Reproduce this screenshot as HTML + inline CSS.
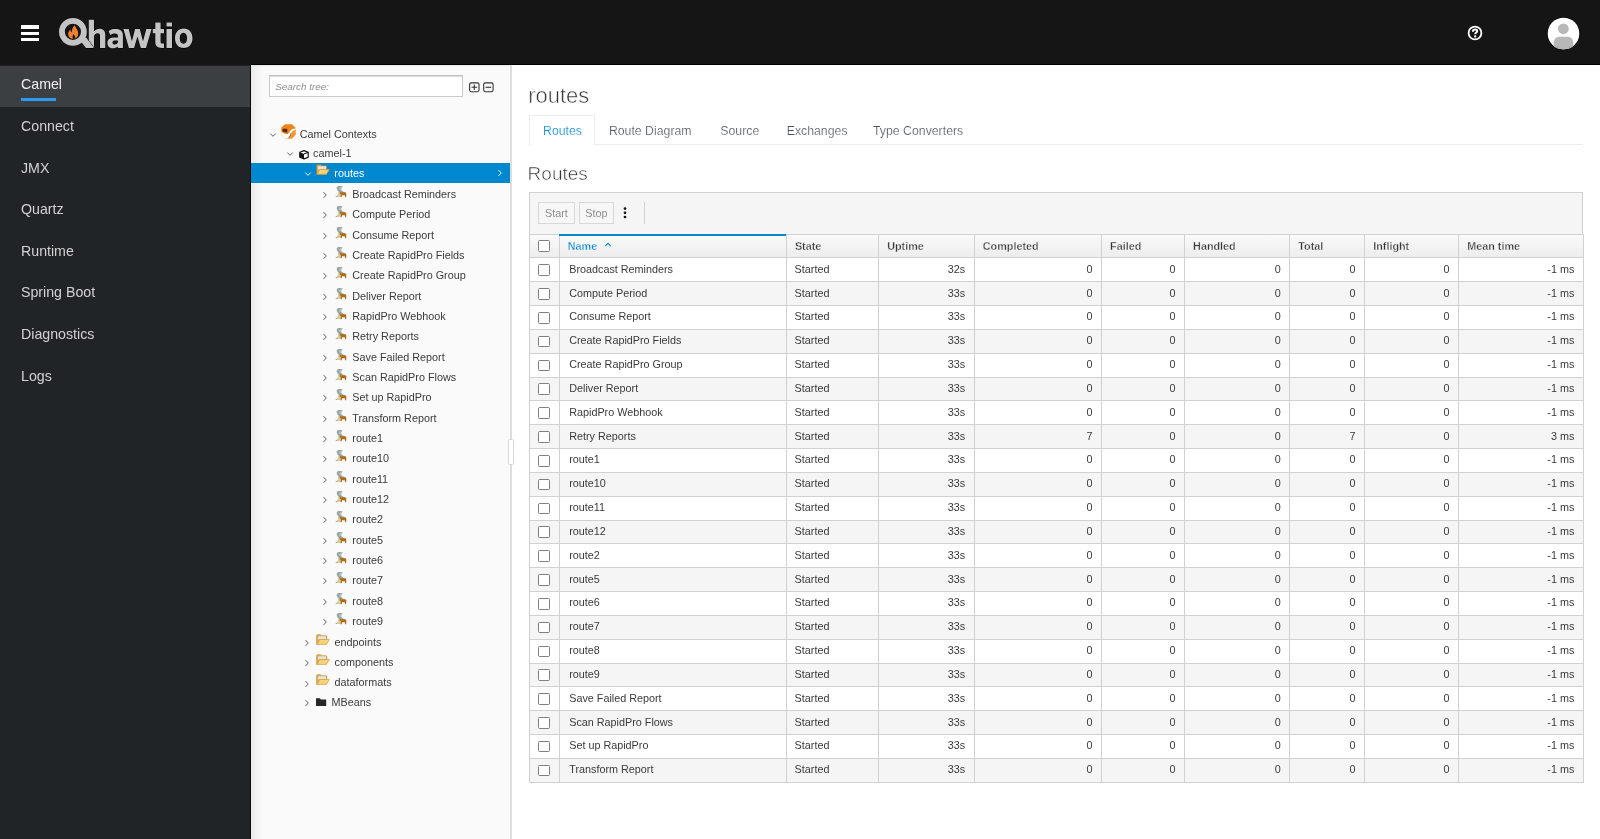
<!DOCTYPE html><html><head><meta charset="utf-8"><style>
*{box-sizing:border-box;margin:0;padding:0}
html,body{width:1600px;height:839px;overflow:hidden;background:#fff;font-family:"Liberation Sans", sans-serif;}
.a{position:absolute;white-space:nowrap}
.nav{position:absolute;left:21px;font-size:14.2px;line-height:16px;color:#d2d2d2;white-space:nowrap}
.t{position:absolute;font-size:10.8px;line-height:13px;color:#3a3a3a;white-space:nowrap}
.th{position:absolute;font-size:10.8px;line-height:13px;color:#363636;font-weight:700;-webkit-text-stroke:0.3px #f2f2f2;white-space:nowrap}
.tab{position:absolute;font-size:12.3px;line-height:14px;color:#4d5258;-webkit-text-stroke:0.2px #fff;white-space:nowrap;top:123.50px}
svg{position:absolute;overflow:visible}
</style></head><body><div id="root" style="position:absolute;left:0;top:0;width:1600px;height:839px;overflow:hidden;will-change:transform">
<div class="a" style="left:0;top:0;width:1600px;height:65px;background:#151515"></div>
<div class="a" style="left:251px;top:64px;width:1349px;height:1.1px;background:#000"></div>
<div class="a" style="left:21px;top:25.2px;width:18px;height:3.6px;background:#fff"></div>
<div class="a" style="left:21px;top:31.5px;width:18px;height:3.6px;background:#fff"></div>
<div class="a" style="left:21px;top:37.6px;width:18px;height:3.6px;background:#fff"></div>
<svg style="left:0;top:0" width="200" height="65" viewBox="0 0 200 65">
<g stroke="#000" stroke-width="1" paint-order="stroke" stroke-linejoin="miter">
<path d="M88.75 19.85 H94 V31.3 C95.4 29.6 97.4 28.7 99.6 28.7 C103.3 28.7 105.3 31.1 105.3 34.8 V47.9 H100 V35.8 C100 34 99.1 33.3 97.6 33.3 C95.8 33.3 94 34.6 94 36.7 V47.9 H88.75 Z" fill="#c4c4c4"/>
<path fill-rule="evenodd" d="M108.6 31.2 C110.2 29.7 112.4 29.1 115.2 29.1 C119.8 29.1 122.9 30.9 122.9 35.2 V47.9 H117.9 V46.4 C116.6 47.6 114.9 48.2 112.9 48.2 C109.6 48.2 107.4 46.2 107.4 42.9 C107.4 39.2 110.3 37.5 114.2 37.5 H117.9 V35.6 C117.9 34.1 116.7 33.4 114.8 33.4 C112.9 33.4 111.3 34 110.3 35 Z M117.9 40.4 H114.6 C113.2 40.4 112.5 41.2 112.5 42.5 C112.5 43.8 113.3 44.6 114.7 44.6 C116.4 44.6 117.9 43.6 117.9 42.1 Z" fill="#c4c4c4"/>
<path d="M80.6 41.2 L86 37.2 L93.9 47.9 L86 48.1 Z" fill="#c4c4c4"/>
<path d="M123.4 29 H128.7 L131.9 41.2 L135.1 29 H139.8 L143 41.2 L146.3 29 H151.6 L146 47.9 H140.8 L137.45 36.4 L134.1 47.9 H128.9 Z" fill="#c4c4c4"/>
<path d="M155.3 22.5 H160.6 V29 H164 V33.2 H160.6 V41.4 C160.6 42.9 161.3 43.6 162.8 43.6 H164 V47.9 H161.8 C157.4 47.9 155.3 46 155.3 42 V33.2 H152.75 V29 H155.3 Z" fill="#c4c4c4"/>
<path d="M166.5 22.5 H172 V26.6 H166.5 Z M166.5 29 H172 V47.9 H166.5 Z" fill="#c4c4c4"/>
<path fill-rule="evenodd" d="M183.75 28.6 C189.3 28.6 192.5 32.6 192.5 38.3 C192.5 44 189.3 48.1 183.75 48.1 C178.2 48.1 175 44 175 38.3 C175 32.6 178.2 28.6 183.75 28.6 Z M183.4 32.8 C181 32.8 179.8 35 179.8 38.3 C179.8 41.6 181 43.8 183.4 43.8 C185.8 43.8 187 41.6 187 38.3 C187 35 185.8 32.8 183.4 32.8 Z" fill="#c4c4c4"/>
</g>
<circle cx="72.9" cy="31.8" r="11" fill="none" stroke="#c4c4c4" stroke-width="5.8"/>
<path d="M74.6 25.2 C75.6 27.8 78.2 29.8 78.2 33.6 C78.2 36.8 76.2 38.9 73.4 38.9 C70.2 38.9 68.1 36.7 68.2 34 C68.3 31.8 69.6 30.6 70.4 29.6 C70.5 31 70.9 32.1 71.8 32.6 C71.6 29.8 72.8 27 74.6 25.2 Z" fill="#f0822f"/>
<path d="M72.8 38.9 C72.2 37 72.6 35.3 73.8 33.9 C74.3 35.6 75.6 36.4 75.5 38.4 Z" fill="#151515"/>
</svg>
<svg style="left:1460px;top:20px" width="30" height="30" viewBox="0 0 30 30">
<circle cx="15" cy="13" r="6.4" fill="none" stroke="#fff" stroke-width="1.8"/>
<path d="M12.9 11.7 C12.9 10.1 13.9 9.4 15.1 9.4 C16.3 9.4 17.2 10.1 17.2 11.2 C17.2 12.5 15.2 12.7 15.2 14.3" fill="none" stroke="#fff" stroke-width="2"/>
<circle cx="15.2" cy="16.4" r="1.15" fill="#fff"/>
</svg>
<svg style="left:1540px;top:10px" width="48" height="48" viewBox="0 0 48 48">
<defs><clipPath id="avc"><circle cx="23.5" cy="23.5" r="15.9"/></clipPath></defs>
<circle cx="23.5" cy="23.5" r="16.2" fill="#000"/>
<circle cx="23.5" cy="23.5" r="15.8" fill="#fff"/>
<g clip-path="url(#avc)">
<circle cx="23.4" cy="18.8" r="5.4" fill="#b8b8b8"/>
<path d="M13.8 40 L13.8 32.5 C13.8 28.8 16.5 26.8 20 26.8 L27 26.8 C30.5 26.8 33.2 28.8 33.2 32.5 L33.2 40 Z" fill="#b8b8b8"/>
<path d="M17.5 36 L17.5 40 M29.4 36 L29.4 40" stroke="#a6a6a6" stroke-width="1.2"/>
</g></svg>
<div class="a" style="left:0;top:65.2px;width:251px;height:774px;background:#212427"></div>
<div class="a" style="left:0;top:65.5px;width:250px;height:41.8px;background:#3c3f42"></div>
<div class="a" style="left:21px;top:97.5px;width:35px;height:3px;background:#2b9af3"></div>
<div class="a" style="left:250px;top:65px;width:1.2px;height:774px;background:#0b0b0b"></div>
<div class="nav" style="top:76.20px;color:#f0f0f0">Camel</div>
<div class="nav" style="top:117.85px;color:#d2d2d2">Connect</div>
<div class="nav" style="top:159.50px;color:#d2d2d2">JMX</div>
<div class="nav" style="top:201.15px;color:#d2d2d2">Quartz</div>
<div class="nav" style="top:242.80px;color:#d2d2d2">Runtime</div>
<div class="nav" style="top:284.45px;color:#d2d2d2">Spring Boot</div>
<div class="nav" style="top:326.10px;color:#d2d2d2">Diagnostics</div>
<div class="nav" style="top:367.75px;color:#d2d2d2">Logs</div>
<div class="a" style="left:251.2px;top:65.2px;width:259.6px;height:774px;background:#fafafa"></div>
<div class="a" style="left:251.2px;top:65.2px;width:12px;height:774px;background:linear-gradient(to right,#e9e9e9,rgba(250,250,250,0))"></div>
<div class="a" style="left:251px;top:65.2px;width:260px;height:2px;background:linear-gradient(to bottom,#e6e6e6,rgba(250,250,250,0))"></div>
<div class="a" style="left:510.3px;top:65.2px;width:1.4px;height:774px;background:#dedede"></div>
<div class="a" style="left:507.5px;top:439.3px;width:6px;height:26.2px;background:#fff;border:1px solid #d8d8d8;border-radius:2px"></div>
<div class="a" style="left:269px;top:74.7px;width:193.5px;height:22px;background:#fff;border:1px solid #c9c9c9;border-top-color:#c2c2c2;box-shadow:inset 0 1px 0 #dcdcdc"></div>
<div class="t" style="left:275.2px;top:79.9px;color:#8c8c8c;font-style:italic;font-size:9.9px">Search tree:</div>
<svg style="left:466px;top:80px" width="30" height="14" viewBox="0 0 30 14">
<rect x="3.6" y="2.9" width="9.4" height="8.8" rx="1.6" fill="none" stroke="#333" stroke-width="1.1"/>
<path d="M5.5 7.3 H11.1 M8.3 4.6 V10" stroke="#333" stroke-width="1.1"/>
<rect x="17.7" y="2.9" width="9.4" height="8.8" rx="1.6" fill="none" stroke="#333" stroke-width="1.1"/>
<path d="M19.6 7.3 H25.2" stroke="#333" stroke-width="1.1"/>
</svg>
<div class="a" style="left:251.2px;top:163px;width:259.1px;height:20.4px;background:#0088ce"></div>
<svg style="left:496.00px;top:169.30px" width="8" height="8" viewBox="0 0 8 8"><path d="M2.5 1.1 L5.3 4 L2.5 6.9" fill="none" stroke="#fff" stroke-width="0.95"/></svg>
<svg style="left:269.40px;top:130.80px" width="8" height="8" viewBox="0 0 8 8"><path d="M1.3 2.6 L4 5.3 L6.7 2.6" fill="none" stroke="#5a5a5a" stroke-width="0.95"/></svg>
<svg style="left:281.3px;top:123.6px" width="15" height="15" viewBox="0 0 15 15">
<path d="M4 0.2 L11 0.2 L14.5 3.8 L14.5 10.8 L11 14.4 L4 14.4 L0.2 10.8 L0.2 3.8 Z" fill="#ef8419"/>
<path d="M9.5 7.5 L14.5 6 L14.5 10.8 L11 14.4 L7.5 14.4 Z" fill="#f39a34"/>
<path d="M1.6 5 C3 4.5 4.8 4.5 6.3 5 L6.2 8.4 C4.6 8.6 3 8.2 1.5 7.3 Z" fill="#55290c"/>
<path d="M0.2 7.3 C1.6 9 3.6 10 5.7 10 C7.2 9.9 8 9 8.8 7.4 C9.8 5.5 11.6 4.6 14.5 4.5 L14.5 5.9 C12.5 6.1 11.2 6.9 10.5 8.5 C9.5 10.9 8.6 13.4 7.2 14.4 L4 14.4 L0.2 10.8 Z" fill="#fff"/>
<path d="M7.2 14.4 C8.5 13.2 9.3 11.4 10.1 9.3" fill="none" stroke="#4a2508" stroke-width="0.6"/>
</svg>
<div class="t" style="left:299.8px;top:127.70px">Camel Contexts</div>
<svg style="left:286.40px;top:150.00px" width="8" height="8" viewBox="0 0 8 8"><path d="M1.3 2.6 L4 5.3 L6.7 2.6" fill="none" stroke="#5a5a5a" stroke-width="0.95"/></svg>
<svg style="left:298.9px;top:149.6px" width="10" height="9.5" viewBox="0 0 10 9.5">
<path d="M5 0.6 L9.2 2.3 L9.2 7.2 L5 8.9 L0.8 7.2 L0.8 2.3 Z" fill="#fff" stroke="#111" stroke-width="1.2" stroke-linejoin="round"/>
<path d="M0.8 2.3 L5 4 L5 8.9 L0.8 7.2 Z" fill="#111"/>
<path d="M5 4 L9.2 2.3" stroke="#111" stroke-width="1.1"/>
</svg>
<div class="t" style="left:313.1px;top:147.00px">camel-1</div>
<svg style="left:303.75px;top:170.40px" width="8" height="8" viewBox="0 0 8 8"><path d="M1.3 2.6 L4 5.3 L6.7 2.6" fill="none" stroke="#fff" stroke-width="0.95"/></svg>
<svg style="left:316.00px;top:164.40px" width="14" height="12" viewBox="0 0 14 12">
<path d="M0.6 1.7 C0.6 1.1 1 0.7 1.5 0.7 L4.6 0.7 L5.6 1.7 L10 1.7 C10.5 1.7 10.8 2.1 10.8 2.6 L10.8 5.2 L0.6 10.4 Z" fill="#e2ac52" stroke="#b07b2a" stroke-width="0.5"/>
<path d="M2 2.3 L10 2.3 L10 5.4 L2 5.4 Z" fill="#e6e6df"/>
<path d="M0.8 10.4 L3.8 5.4 L13.4 5.4 L10.4 10.4 Z" fill="#f6d27c" stroke="#c9902f" stroke-width="0.6"/>
</svg>
<div class="t" style="left:334.3px;top:167.40px;color:#fff">routes</div>
<svg style="left:320.60px;top:190.90px" width="8" height="8" viewBox="0 0 8 8"><path d="M2.5 1.1 L5.3 4 L2.5 6.9" fill="none" stroke="#5a5a5a" stroke-width="0.95"/></svg>
<svg style="left:335.00px;top:186.00px" width="12" height="12" viewBox="0 0 12 12">
<path d="M2.7 0.3 C4.5 -0.1 6.6 0 8 0.6 C6.2 1.5 5.7 3.2 6.6 4.4 C7.4 5.4 9.2 5.9 11.2 6.6 L9.5 7.6 C7.2 7.3 4.8 6.6 3.4 5.3 C1.5 3.8 1.1 1.4 2.7 0.3 Z" fill="#98a5a3"/>
<path d="M3.6 3 C4.2 2 5.2 1.2 6.4 0.9 C5.6 2 5.5 3.3 6.1 4.4 Z" fill="#bfcac6"/>
<path d="M2.4 4.4 C3.8 5.8 4 7.2 3.2 8.5 C2.6 9.5 1.6 10.3 0.3 10.9 L4 10.9 L4.8 6.8 Z" fill="#a09b6e"/>
<path d="M3.7 6.4 L6.6 10.9 L1.8 10.9 Z" fill="#d9cc9e"/>
<path d="M4.3 5.6 L5.4 5.6 L6.6 6.6 L8.5 6.2 L10.3 6.6 L11.4 7.4 L11.3 8.7 L11.1 11.2 L10.2 11.2 L9.8 9.2 L7.1 9.2 L6.6 11.2 L5.7 11.2 L5.6 8.7 L4.9 7.1 Z" fill="#b06c14"/>
</svg>
<div class="t" style="left:352.3px;top:188.10px">Broadcast Reminders</div>
<svg style="left:320.60px;top:211.23px" width="8" height="8" viewBox="0 0 8 8"><path d="M2.5 1.1 L5.3 4 L2.5 6.9" fill="none" stroke="#5a5a5a" stroke-width="0.95"/></svg>
<svg style="left:335.00px;top:206.33px" width="12" height="12" viewBox="0 0 12 12">
<path d="M2.7 0.3 C4.5 -0.1 6.6 0 8 0.6 C6.2 1.5 5.7 3.2 6.6 4.4 C7.4 5.4 9.2 5.9 11.2 6.6 L9.5 7.6 C7.2 7.3 4.8 6.6 3.4 5.3 C1.5 3.8 1.1 1.4 2.7 0.3 Z" fill="#98a5a3"/>
<path d="M3.6 3 C4.2 2 5.2 1.2 6.4 0.9 C5.6 2 5.5 3.3 6.1 4.4 Z" fill="#bfcac6"/>
<path d="M2.4 4.4 C3.8 5.8 4 7.2 3.2 8.5 C2.6 9.5 1.6 10.3 0.3 10.9 L4 10.9 L4.8 6.8 Z" fill="#a09b6e"/>
<path d="M3.7 6.4 L6.6 10.9 L1.8 10.9 Z" fill="#d9cc9e"/>
<path d="M4.3 5.6 L5.4 5.6 L6.6 6.6 L8.5 6.2 L10.3 6.6 L11.4 7.4 L11.3 8.7 L11.1 11.2 L10.2 11.2 L9.8 9.2 L7.1 9.2 L6.6 11.2 L5.7 11.2 L5.6 8.7 L4.9 7.1 Z" fill="#b06c14"/>
</svg>
<div class="t" style="left:352.3px;top:208.43px">Compute Period</div>
<svg style="left:320.60px;top:231.56px" width="8" height="8" viewBox="0 0 8 8"><path d="M2.5 1.1 L5.3 4 L2.5 6.9" fill="none" stroke="#5a5a5a" stroke-width="0.95"/></svg>
<svg style="left:335.00px;top:226.66px" width="12" height="12" viewBox="0 0 12 12">
<path d="M2.7 0.3 C4.5 -0.1 6.6 0 8 0.6 C6.2 1.5 5.7 3.2 6.6 4.4 C7.4 5.4 9.2 5.9 11.2 6.6 L9.5 7.6 C7.2 7.3 4.8 6.6 3.4 5.3 C1.5 3.8 1.1 1.4 2.7 0.3 Z" fill="#98a5a3"/>
<path d="M3.6 3 C4.2 2 5.2 1.2 6.4 0.9 C5.6 2 5.5 3.3 6.1 4.4 Z" fill="#bfcac6"/>
<path d="M2.4 4.4 C3.8 5.8 4 7.2 3.2 8.5 C2.6 9.5 1.6 10.3 0.3 10.9 L4 10.9 L4.8 6.8 Z" fill="#a09b6e"/>
<path d="M3.7 6.4 L6.6 10.9 L1.8 10.9 Z" fill="#d9cc9e"/>
<path d="M4.3 5.6 L5.4 5.6 L6.6 6.6 L8.5 6.2 L10.3 6.6 L11.4 7.4 L11.3 8.7 L11.1 11.2 L10.2 11.2 L9.8 9.2 L7.1 9.2 L6.6 11.2 L5.7 11.2 L5.6 8.7 L4.9 7.1 Z" fill="#b06c14"/>
</svg>
<div class="t" style="left:352.3px;top:228.76px">Consume Report</div>
<svg style="left:320.60px;top:251.89px" width="8" height="8" viewBox="0 0 8 8"><path d="M2.5 1.1 L5.3 4 L2.5 6.9" fill="none" stroke="#5a5a5a" stroke-width="0.95"/></svg>
<svg style="left:335.00px;top:246.99px" width="12" height="12" viewBox="0 0 12 12">
<path d="M2.7 0.3 C4.5 -0.1 6.6 0 8 0.6 C6.2 1.5 5.7 3.2 6.6 4.4 C7.4 5.4 9.2 5.9 11.2 6.6 L9.5 7.6 C7.2 7.3 4.8 6.6 3.4 5.3 C1.5 3.8 1.1 1.4 2.7 0.3 Z" fill="#98a5a3"/>
<path d="M3.6 3 C4.2 2 5.2 1.2 6.4 0.9 C5.6 2 5.5 3.3 6.1 4.4 Z" fill="#bfcac6"/>
<path d="M2.4 4.4 C3.8 5.8 4 7.2 3.2 8.5 C2.6 9.5 1.6 10.3 0.3 10.9 L4 10.9 L4.8 6.8 Z" fill="#a09b6e"/>
<path d="M3.7 6.4 L6.6 10.9 L1.8 10.9 Z" fill="#d9cc9e"/>
<path d="M4.3 5.6 L5.4 5.6 L6.6 6.6 L8.5 6.2 L10.3 6.6 L11.4 7.4 L11.3 8.7 L11.1 11.2 L10.2 11.2 L9.8 9.2 L7.1 9.2 L6.6 11.2 L5.7 11.2 L5.6 8.7 L4.9 7.1 Z" fill="#b06c14"/>
</svg>
<div class="t" style="left:352.3px;top:249.09px">Create RapidPro Fields</div>
<svg style="left:320.60px;top:272.22px" width="8" height="8" viewBox="0 0 8 8"><path d="M2.5 1.1 L5.3 4 L2.5 6.9" fill="none" stroke="#5a5a5a" stroke-width="0.95"/></svg>
<svg style="left:335.00px;top:267.32px" width="12" height="12" viewBox="0 0 12 12">
<path d="M2.7 0.3 C4.5 -0.1 6.6 0 8 0.6 C6.2 1.5 5.7 3.2 6.6 4.4 C7.4 5.4 9.2 5.9 11.2 6.6 L9.5 7.6 C7.2 7.3 4.8 6.6 3.4 5.3 C1.5 3.8 1.1 1.4 2.7 0.3 Z" fill="#98a5a3"/>
<path d="M3.6 3 C4.2 2 5.2 1.2 6.4 0.9 C5.6 2 5.5 3.3 6.1 4.4 Z" fill="#bfcac6"/>
<path d="M2.4 4.4 C3.8 5.8 4 7.2 3.2 8.5 C2.6 9.5 1.6 10.3 0.3 10.9 L4 10.9 L4.8 6.8 Z" fill="#a09b6e"/>
<path d="M3.7 6.4 L6.6 10.9 L1.8 10.9 Z" fill="#d9cc9e"/>
<path d="M4.3 5.6 L5.4 5.6 L6.6 6.6 L8.5 6.2 L10.3 6.6 L11.4 7.4 L11.3 8.7 L11.1 11.2 L10.2 11.2 L9.8 9.2 L7.1 9.2 L6.6 11.2 L5.7 11.2 L5.6 8.7 L4.9 7.1 Z" fill="#b06c14"/>
</svg>
<div class="t" style="left:352.3px;top:269.42px">Create RapidPro Group</div>
<svg style="left:320.60px;top:292.55px" width="8" height="8" viewBox="0 0 8 8"><path d="M2.5 1.1 L5.3 4 L2.5 6.9" fill="none" stroke="#5a5a5a" stroke-width="0.95"/></svg>
<svg style="left:335.00px;top:287.65px" width="12" height="12" viewBox="0 0 12 12">
<path d="M2.7 0.3 C4.5 -0.1 6.6 0 8 0.6 C6.2 1.5 5.7 3.2 6.6 4.4 C7.4 5.4 9.2 5.9 11.2 6.6 L9.5 7.6 C7.2 7.3 4.8 6.6 3.4 5.3 C1.5 3.8 1.1 1.4 2.7 0.3 Z" fill="#98a5a3"/>
<path d="M3.6 3 C4.2 2 5.2 1.2 6.4 0.9 C5.6 2 5.5 3.3 6.1 4.4 Z" fill="#bfcac6"/>
<path d="M2.4 4.4 C3.8 5.8 4 7.2 3.2 8.5 C2.6 9.5 1.6 10.3 0.3 10.9 L4 10.9 L4.8 6.8 Z" fill="#a09b6e"/>
<path d="M3.7 6.4 L6.6 10.9 L1.8 10.9 Z" fill="#d9cc9e"/>
<path d="M4.3 5.6 L5.4 5.6 L6.6 6.6 L8.5 6.2 L10.3 6.6 L11.4 7.4 L11.3 8.7 L11.1 11.2 L10.2 11.2 L9.8 9.2 L7.1 9.2 L6.6 11.2 L5.7 11.2 L5.6 8.7 L4.9 7.1 Z" fill="#b06c14"/>
</svg>
<div class="t" style="left:352.3px;top:289.75px">Deliver Report</div>
<svg style="left:320.60px;top:312.88px" width="8" height="8" viewBox="0 0 8 8"><path d="M2.5 1.1 L5.3 4 L2.5 6.9" fill="none" stroke="#5a5a5a" stroke-width="0.95"/></svg>
<svg style="left:335.00px;top:307.98px" width="12" height="12" viewBox="0 0 12 12">
<path d="M2.7 0.3 C4.5 -0.1 6.6 0 8 0.6 C6.2 1.5 5.7 3.2 6.6 4.4 C7.4 5.4 9.2 5.9 11.2 6.6 L9.5 7.6 C7.2 7.3 4.8 6.6 3.4 5.3 C1.5 3.8 1.1 1.4 2.7 0.3 Z" fill="#98a5a3"/>
<path d="M3.6 3 C4.2 2 5.2 1.2 6.4 0.9 C5.6 2 5.5 3.3 6.1 4.4 Z" fill="#bfcac6"/>
<path d="M2.4 4.4 C3.8 5.8 4 7.2 3.2 8.5 C2.6 9.5 1.6 10.3 0.3 10.9 L4 10.9 L4.8 6.8 Z" fill="#a09b6e"/>
<path d="M3.7 6.4 L6.6 10.9 L1.8 10.9 Z" fill="#d9cc9e"/>
<path d="M4.3 5.6 L5.4 5.6 L6.6 6.6 L8.5 6.2 L10.3 6.6 L11.4 7.4 L11.3 8.7 L11.1 11.2 L10.2 11.2 L9.8 9.2 L7.1 9.2 L6.6 11.2 L5.7 11.2 L5.6 8.7 L4.9 7.1 Z" fill="#b06c14"/>
</svg>
<div class="t" style="left:352.3px;top:310.08px">RapidPro Webhook</div>
<svg style="left:320.60px;top:333.21px" width="8" height="8" viewBox="0 0 8 8"><path d="M2.5 1.1 L5.3 4 L2.5 6.9" fill="none" stroke="#5a5a5a" stroke-width="0.95"/></svg>
<svg style="left:335.00px;top:328.31px" width="12" height="12" viewBox="0 0 12 12">
<path d="M2.7 0.3 C4.5 -0.1 6.6 0 8 0.6 C6.2 1.5 5.7 3.2 6.6 4.4 C7.4 5.4 9.2 5.9 11.2 6.6 L9.5 7.6 C7.2 7.3 4.8 6.6 3.4 5.3 C1.5 3.8 1.1 1.4 2.7 0.3 Z" fill="#98a5a3"/>
<path d="M3.6 3 C4.2 2 5.2 1.2 6.4 0.9 C5.6 2 5.5 3.3 6.1 4.4 Z" fill="#bfcac6"/>
<path d="M2.4 4.4 C3.8 5.8 4 7.2 3.2 8.5 C2.6 9.5 1.6 10.3 0.3 10.9 L4 10.9 L4.8 6.8 Z" fill="#a09b6e"/>
<path d="M3.7 6.4 L6.6 10.9 L1.8 10.9 Z" fill="#d9cc9e"/>
<path d="M4.3 5.6 L5.4 5.6 L6.6 6.6 L8.5 6.2 L10.3 6.6 L11.4 7.4 L11.3 8.7 L11.1 11.2 L10.2 11.2 L9.8 9.2 L7.1 9.2 L6.6 11.2 L5.7 11.2 L5.6 8.7 L4.9 7.1 Z" fill="#b06c14"/>
</svg>
<div class="t" style="left:352.3px;top:330.41px">Retry Reports</div>
<svg style="left:320.60px;top:353.54px" width="8" height="8" viewBox="0 0 8 8"><path d="M2.5 1.1 L5.3 4 L2.5 6.9" fill="none" stroke="#5a5a5a" stroke-width="0.95"/></svg>
<svg style="left:335.00px;top:348.64px" width="12" height="12" viewBox="0 0 12 12">
<path d="M2.7 0.3 C4.5 -0.1 6.6 0 8 0.6 C6.2 1.5 5.7 3.2 6.6 4.4 C7.4 5.4 9.2 5.9 11.2 6.6 L9.5 7.6 C7.2 7.3 4.8 6.6 3.4 5.3 C1.5 3.8 1.1 1.4 2.7 0.3 Z" fill="#98a5a3"/>
<path d="M3.6 3 C4.2 2 5.2 1.2 6.4 0.9 C5.6 2 5.5 3.3 6.1 4.4 Z" fill="#bfcac6"/>
<path d="M2.4 4.4 C3.8 5.8 4 7.2 3.2 8.5 C2.6 9.5 1.6 10.3 0.3 10.9 L4 10.9 L4.8 6.8 Z" fill="#a09b6e"/>
<path d="M3.7 6.4 L6.6 10.9 L1.8 10.9 Z" fill="#d9cc9e"/>
<path d="M4.3 5.6 L5.4 5.6 L6.6 6.6 L8.5 6.2 L10.3 6.6 L11.4 7.4 L11.3 8.7 L11.1 11.2 L10.2 11.2 L9.8 9.2 L7.1 9.2 L6.6 11.2 L5.7 11.2 L5.6 8.7 L4.9 7.1 Z" fill="#b06c14"/>
</svg>
<div class="t" style="left:352.3px;top:350.74px">Save Failed Report</div>
<svg style="left:320.60px;top:373.87px" width="8" height="8" viewBox="0 0 8 8"><path d="M2.5 1.1 L5.3 4 L2.5 6.9" fill="none" stroke="#5a5a5a" stroke-width="0.95"/></svg>
<svg style="left:335.00px;top:368.97px" width="12" height="12" viewBox="0 0 12 12">
<path d="M2.7 0.3 C4.5 -0.1 6.6 0 8 0.6 C6.2 1.5 5.7 3.2 6.6 4.4 C7.4 5.4 9.2 5.9 11.2 6.6 L9.5 7.6 C7.2 7.3 4.8 6.6 3.4 5.3 C1.5 3.8 1.1 1.4 2.7 0.3 Z" fill="#98a5a3"/>
<path d="M3.6 3 C4.2 2 5.2 1.2 6.4 0.9 C5.6 2 5.5 3.3 6.1 4.4 Z" fill="#bfcac6"/>
<path d="M2.4 4.4 C3.8 5.8 4 7.2 3.2 8.5 C2.6 9.5 1.6 10.3 0.3 10.9 L4 10.9 L4.8 6.8 Z" fill="#a09b6e"/>
<path d="M3.7 6.4 L6.6 10.9 L1.8 10.9 Z" fill="#d9cc9e"/>
<path d="M4.3 5.6 L5.4 5.6 L6.6 6.6 L8.5 6.2 L10.3 6.6 L11.4 7.4 L11.3 8.7 L11.1 11.2 L10.2 11.2 L9.8 9.2 L7.1 9.2 L6.6 11.2 L5.7 11.2 L5.6 8.7 L4.9 7.1 Z" fill="#b06c14"/>
</svg>
<div class="t" style="left:352.3px;top:371.07px">Scan RapidPro Flows</div>
<svg style="left:320.60px;top:394.20px" width="8" height="8" viewBox="0 0 8 8"><path d="M2.5 1.1 L5.3 4 L2.5 6.9" fill="none" stroke="#5a5a5a" stroke-width="0.95"/></svg>
<svg style="left:335.00px;top:389.30px" width="12" height="12" viewBox="0 0 12 12">
<path d="M2.7 0.3 C4.5 -0.1 6.6 0 8 0.6 C6.2 1.5 5.7 3.2 6.6 4.4 C7.4 5.4 9.2 5.9 11.2 6.6 L9.5 7.6 C7.2 7.3 4.8 6.6 3.4 5.3 C1.5 3.8 1.1 1.4 2.7 0.3 Z" fill="#98a5a3"/>
<path d="M3.6 3 C4.2 2 5.2 1.2 6.4 0.9 C5.6 2 5.5 3.3 6.1 4.4 Z" fill="#bfcac6"/>
<path d="M2.4 4.4 C3.8 5.8 4 7.2 3.2 8.5 C2.6 9.5 1.6 10.3 0.3 10.9 L4 10.9 L4.8 6.8 Z" fill="#a09b6e"/>
<path d="M3.7 6.4 L6.6 10.9 L1.8 10.9 Z" fill="#d9cc9e"/>
<path d="M4.3 5.6 L5.4 5.6 L6.6 6.6 L8.5 6.2 L10.3 6.6 L11.4 7.4 L11.3 8.7 L11.1 11.2 L10.2 11.2 L9.8 9.2 L7.1 9.2 L6.6 11.2 L5.7 11.2 L5.6 8.7 L4.9 7.1 Z" fill="#b06c14"/>
</svg>
<div class="t" style="left:352.3px;top:391.40px">Set up RapidPro</div>
<svg style="left:320.60px;top:414.53px" width="8" height="8" viewBox="0 0 8 8"><path d="M2.5 1.1 L5.3 4 L2.5 6.9" fill="none" stroke="#5a5a5a" stroke-width="0.95"/></svg>
<svg style="left:335.00px;top:409.63px" width="12" height="12" viewBox="0 0 12 12">
<path d="M2.7 0.3 C4.5 -0.1 6.6 0 8 0.6 C6.2 1.5 5.7 3.2 6.6 4.4 C7.4 5.4 9.2 5.9 11.2 6.6 L9.5 7.6 C7.2 7.3 4.8 6.6 3.4 5.3 C1.5 3.8 1.1 1.4 2.7 0.3 Z" fill="#98a5a3"/>
<path d="M3.6 3 C4.2 2 5.2 1.2 6.4 0.9 C5.6 2 5.5 3.3 6.1 4.4 Z" fill="#bfcac6"/>
<path d="M2.4 4.4 C3.8 5.8 4 7.2 3.2 8.5 C2.6 9.5 1.6 10.3 0.3 10.9 L4 10.9 L4.8 6.8 Z" fill="#a09b6e"/>
<path d="M3.7 6.4 L6.6 10.9 L1.8 10.9 Z" fill="#d9cc9e"/>
<path d="M4.3 5.6 L5.4 5.6 L6.6 6.6 L8.5 6.2 L10.3 6.6 L11.4 7.4 L11.3 8.7 L11.1 11.2 L10.2 11.2 L9.8 9.2 L7.1 9.2 L6.6 11.2 L5.7 11.2 L5.6 8.7 L4.9 7.1 Z" fill="#b06c14"/>
</svg>
<div class="t" style="left:352.3px;top:411.73px">Transform Report</div>
<svg style="left:320.60px;top:434.86px" width="8" height="8" viewBox="0 0 8 8"><path d="M2.5 1.1 L5.3 4 L2.5 6.9" fill="none" stroke="#5a5a5a" stroke-width="0.95"/></svg>
<svg style="left:335.00px;top:429.96px" width="12" height="12" viewBox="0 0 12 12">
<path d="M2.7 0.3 C4.5 -0.1 6.6 0 8 0.6 C6.2 1.5 5.7 3.2 6.6 4.4 C7.4 5.4 9.2 5.9 11.2 6.6 L9.5 7.6 C7.2 7.3 4.8 6.6 3.4 5.3 C1.5 3.8 1.1 1.4 2.7 0.3 Z" fill="#98a5a3"/>
<path d="M3.6 3 C4.2 2 5.2 1.2 6.4 0.9 C5.6 2 5.5 3.3 6.1 4.4 Z" fill="#bfcac6"/>
<path d="M2.4 4.4 C3.8 5.8 4 7.2 3.2 8.5 C2.6 9.5 1.6 10.3 0.3 10.9 L4 10.9 L4.8 6.8 Z" fill="#a09b6e"/>
<path d="M3.7 6.4 L6.6 10.9 L1.8 10.9 Z" fill="#d9cc9e"/>
<path d="M4.3 5.6 L5.4 5.6 L6.6 6.6 L8.5 6.2 L10.3 6.6 L11.4 7.4 L11.3 8.7 L11.1 11.2 L10.2 11.2 L9.8 9.2 L7.1 9.2 L6.6 11.2 L5.7 11.2 L5.6 8.7 L4.9 7.1 Z" fill="#b06c14"/>
</svg>
<div class="t" style="left:352.3px;top:432.06px">route1</div>
<svg style="left:320.60px;top:455.19px" width="8" height="8" viewBox="0 0 8 8"><path d="M2.5 1.1 L5.3 4 L2.5 6.9" fill="none" stroke="#5a5a5a" stroke-width="0.95"/></svg>
<svg style="left:335.00px;top:450.29px" width="12" height="12" viewBox="0 0 12 12">
<path d="M2.7 0.3 C4.5 -0.1 6.6 0 8 0.6 C6.2 1.5 5.7 3.2 6.6 4.4 C7.4 5.4 9.2 5.9 11.2 6.6 L9.5 7.6 C7.2 7.3 4.8 6.6 3.4 5.3 C1.5 3.8 1.1 1.4 2.7 0.3 Z" fill="#98a5a3"/>
<path d="M3.6 3 C4.2 2 5.2 1.2 6.4 0.9 C5.6 2 5.5 3.3 6.1 4.4 Z" fill="#bfcac6"/>
<path d="M2.4 4.4 C3.8 5.8 4 7.2 3.2 8.5 C2.6 9.5 1.6 10.3 0.3 10.9 L4 10.9 L4.8 6.8 Z" fill="#a09b6e"/>
<path d="M3.7 6.4 L6.6 10.9 L1.8 10.9 Z" fill="#d9cc9e"/>
<path d="M4.3 5.6 L5.4 5.6 L6.6 6.6 L8.5 6.2 L10.3 6.6 L11.4 7.4 L11.3 8.7 L11.1 11.2 L10.2 11.2 L9.8 9.2 L7.1 9.2 L6.6 11.2 L5.7 11.2 L5.6 8.7 L4.9 7.1 Z" fill="#b06c14"/>
</svg>
<div class="t" style="left:352.3px;top:452.39px">route10</div>
<svg style="left:320.60px;top:475.52px" width="8" height="8" viewBox="0 0 8 8"><path d="M2.5 1.1 L5.3 4 L2.5 6.9" fill="none" stroke="#5a5a5a" stroke-width="0.95"/></svg>
<svg style="left:335.00px;top:470.62px" width="12" height="12" viewBox="0 0 12 12">
<path d="M2.7 0.3 C4.5 -0.1 6.6 0 8 0.6 C6.2 1.5 5.7 3.2 6.6 4.4 C7.4 5.4 9.2 5.9 11.2 6.6 L9.5 7.6 C7.2 7.3 4.8 6.6 3.4 5.3 C1.5 3.8 1.1 1.4 2.7 0.3 Z" fill="#98a5a3"/>
<path d="M3.6 3 C4.2 2 5.2 1.2 6.4 0.9 C5.6 2 5.5 3.3 6.1 4.4 Z" fill="#bfcac6"/>
<path d="M2.4 4.4 C3.8 5.8 4 7.2 3.2 8.5 C2.6 9.5 1.6 10.3 0.3 10.9 L4 10.9 L4.8 6.8 Z" fill="#a09b6e"/>
<path d="M3.7 6.4 L6.6 10.9 L1.8 10.9 Z" fill="#d9cc9e"/>
<path d="M4.3 5.6 L5.4 5.6 L6.6 6.6 L8.5 6.2 L10.3 6.6 L11.4 7.4 L11.3 8.7 L11.1 11.2 L10.2 11.2 L9.8 9.2 L7.1 9.2 L6.6 11.2 L5.7 11.2 L5.6 8.7 L4.9 7.1 Z" fill="#b06c14"/>
</svg>
<div class="t" style="left:352.3px;top:472.72px">route11</div>
<svg style="left:320.60px;top:495.85px" width="8" height="8" viewBox="0 0 8 8"><path d="M2.5 1.1 L5.3 4 L2.5 6.9" fill="none" stroke="#5a5a5a" stroke-width="0.95"/></svg>
<svg style="left:335.00px;top:490.95px" width="12" height="12" viewBox="0 0 12 12">
<path d="M2.7 0.3 C4.5 -0.1 6.6 0 8 0.6 C6.2 1.5 5.7 3.2 6.6 4.4 C7.4 5.4 9.2 5.9 11.2 6.6 L9.5 7.6 C7.2 7.3 4.8 6.6 3.4 5.3 C1.5 3.8 1.1 1.4 2.7 0.3 Z" fill="#98a5a3"/>
<path d="M3.6 3 C4.2 2 5.2 1.2 6.4 0.9 C5.6 2 5.5 3.3 6.1 4.4 Z" fill="#bfcac6"/>
<path d="M2.4 4.4 C3.8 5.8 4 7.2 3.2 8.5 C2.6 9.5 1.6 10.3 0.3 10.9 L4 10.9 L4.8 6.8 Z" fill="#a09b6e"/>
<path d="M3.7 6.4 L6.6 10.9 L1.8 10.9 Z" fill="#d9cc9e"/>
<path d="M4.3 5.6 L5.4 5.6 L6.6 6.6 L8.5 6.2 L10.3 6.6 L11.4 7.4 L11.3 8.7 L11.1 11.2 L10.2 11.2 L9.8 9.2 L7.1 9.2 L6.6 11.2 L5.7 11.2 L5.6 8.7 L4.9 7.1 Z" fill="#b06c14"/>
</svg>
<div class="t" style="left:352.3px;top:493.05px">route12</div>
<svg style="left:320.60px;top:516.18px" width="8" height="8" viewBox="0 0 8 8"><path d="M2.5 1.1 L5.3 4 L2.5 6.9" fill="none" stroke="#5a5a5a" stroke-width="0.95"/></svg>
<svg style="left:335.00px;top:511.28px" width="12" height="12" viewBox="0 0 12 12">
<path d="M2.7 0.3 C4.5 -0.1 6.6 0 8 0.6 C6.2 1.5 5.7 3.2 6.6 4.4 C7.4 5.4 9.2 5.9 11.2 6.6 L9.5 7.6 C7.2 7.3 4.8 6.6 3.4 5.3 C1.5 3.8 1.1 1.4 2.7 0.3 Z" fill="#98a5a3"/>
<path d="M3.6 3 C4.2 2 5.2 1.2 6.4 0.9 C5.6 2 5.5 3.3 6.1 4.4 Z" fill="#bfcac6"/>
<path d="M2.4 4.4 C3.8 5.8 4 7.2 3.2 8.5 C2.6 9.5 1.6 10.3 0.3 10.9 L4 10.9 L4.8 6.8 Z" fill="#a09b6e"/>
<path d="M3.7 6.4 L6.6 10.9 L1.8 10.9 Z" fill="#d9cc9e"/>
<path d="M4.3 5.6 L5.4 5.6 L6.6 6.6 L8.5 6.2 L10.3 6.6 L11.4 7.4 L11.3 8.7 L11.1 11.2 L10.2 11.2 L9.8 9.2 L7.1 9.2 L6.6 11.2 L5.7 11.2 L5.6 8.7 L4.9 7.1 Z" fill="#b06c14"/>
</svg>
<div class="t" style="left:352.3px;top:513.38px">route2</div>
<svg style="left:320.60px;top:536.51px" width="8" height="8" viewBox="0 0 8 8"><path d="M2.5 1.1 L5.3 4 L2.5 6.9" fill="none" stroke="#5a5a5a" stroke-width="0.95"/></svg>
<svg style="left:335.00px;top:531.61px" width="12" height="12" viewBox="0 0 12 12">
<path d="M2.7 0.3 C4.5 -0.1 6.6 0 8 0.6 C6.2 1.5 5.7 3.2 6.6 4.4 C7.4 5.4 9.2 5.9 11.2 6.6 L9.5 7.6 C7.2 7.3 4.8 6.6 3.4 5.3 C1.5 3.8 1.1 1.4 2.7 0.3 Z" fill="#98a5a3"/>
<path d="M3.6 3 C4.2 2 5.2 1.2 6.4 0.9 C5.6 2 5.5 3.3 6.1 4.4 Z" fill="#bfcac6"/>
<path d="M2.4 4.4 C3.8 5.8 4 7.2 3.2 8.5 C2.6 9.5 1.6 10.3 0.3 10.9 L4 10.9 L4.8 6.8 Z" fill="#a09b6e"/>
<path d="M3.7 6.4 L6.6 10.9 L1.8 10.9 Z" fill="#d9cc9e"/>
<path d="M4.3 5.6 L5.4 5.6 L6.6 6.6 L8.5 6.2 L10.3 6.6 L11.4 7.4 L11.3 8.7 L11.1 11.2 L10.2 11.2 L9.8 9.2 L7.1 9.2 L6.6 11.2 L5.7 11.2 L5.6 8.7 L4.9 7.1 Z" fill="#b06c14"/>
</svg>
<div class="t" style="left:352.3px;top:533.71px">route5</div>
<svg style="left:320.60px;top:556.84px" width="8" height="8" viewBox="0 0 8 8"><path d="M2.5 1.1 L5.3 4 L2.5 6.9" fill="none" stroke="#5a5a5a" stroke-width="0.95"/></svg>
<svg style="left:335.00px;top:551.94px" width="12" height="12" viewBox="0 0 12 12">
<path d="M2.7 0.3 C4.5 -0.1 6.6 0 8 0.6 C6.2 1.5 5.7 3.2 6.6 4.4 C7.4 5.4 9.2 5.9 11.2 6.6 L9.5 7.6 C7.2 7.3 4.8 6.6 3.4 5.3 C1.5 3.8 1.1 1.4 2.7 0.3 Z" fill="#98a5a3"/>
<path d="M3.6 3 C4.2 2 5.2 1.2 6.4 0.9 C5.6 2 5.5 3.3 6.1 4.4 Z" fill="#bfcac6"/>
<path d="M2.4 4.4 C3.8 5.8 4 7.2 3.2 8.5 C2.6 9.5 1.6 10.3 0.3 10.9 L4 10.9 L4.8 6.8 Z" fill="#a09b6e"/>
<path d="M3.7 6.4 L6.6 10.9 L1.8 10.9 Z" fill="#d9cc9e"/>
<path d="M4.3 5.6 L5.4 5.6 L6.6 6.6 L8.5 6.2 L10.3 6.6 L11.4 7.4 L11.3 8.7 L11.1 11.2 L10.2 11.2 L9.8 9.2 L7.1 9.2 L6.6 11.2 L5.7 11.2 L5.6 8.7 L4.9 7.1 Z" fill="#b06c14"/>
</svg>
<div class="t" style="left:352.3px;top:554.04px">route6</div>
<svg style="left:320.60px;top:577.17px" width="8" height="8" viewBox="0 0 8 8"><path d="M2.5 1.1 L5.3 4 L2.5 6.9" fill="none" stroke="#5a5a5a" stroke-width="0.95"/></svg>
<svg style="left:335.00px;top:572.27px" width="12" height="12" viewBox="0 0 12 12">
<path d="M2.7 0.3 C4.5 -0.1 6.6 0 8 0.6 C6.2 1.5 5.7 3.2 6.6 4.4 C7.4 5.4 9.2 5.9 11.2 6.6 L9.5 7.6 C7.2 7.3 4.8 6.6 3.4 5.3 C1.5 3.8 1.1 1.4 2.7 0.3 Z" fill="#98a5a3"/>
<path d="M3.6 3 C4.2 2 5.2 1.2 6.4 0.9 C5.6 2 5.5 3.3 6.1 4.4 Z" fill="#bfcac6"/>
<path d="M2.4 4.4 C3.8 5.8 4 7.2 3.2 8.5 C2.6 9.5 1.6 10.3 0.3 10.9 L4 10.9 L4.8 6.8 Z" fill="#a09b6e"/>
<path d="M3.7 6.4 L6.6 10.9 L1.8 10.9 Z" fill="#d9cc9e"/>
<path d="M4.3 5.6 L5.4 5.6 L6.6 6.6 L8.5 6.2 L10.3 6.6 L11.4 7.4 L11.3 8.7 L11.1 11.2 L10.2 11.2 L9.8 9.2 L7.1 9.2 L6.6 11.2 L5.7 11.2 L5.6 8.7 L4.9 7.1 Z" fill="#b06c14"/>
</svg>
<div class="t" style="left:352.3px;top:574.37px">route7</div>
<svg style="left:320.60px;top:597.50px" width="8" height="8" viewBox="0 0 8 8"><path d="M2.5 1.1 L5.3 4 L2.5 6.9" fill="none" stroke="#5a5a5a" stroke-width="0.95"/></svg>
<svg style="left:335.00px;top:592.60px" width="12" height="12" viewBox="0 0 12 12">
<path d="M2.7 0.3 C4.5 -0.1 6.6 0 8 0.6 C6.2 1.5 5.7 3.2 6.6 4.4 C7.4 5.4 9.2 5.9 11.2 6.6 L9.5 7.6 C7.2 7.3 4.8 6.6 3.4 5.3 C1.5 3.8 1.1 1.4 2.7 0.3 Z" fill="#98a5a3"/>
<path d="M3.6 3 C4.2 2 5.2 1.2 6.4 0.9 C5.6 2 5.5 3.3 6.1 4.4 Z" fill="#bfcac6"/>
<path d="M2.4 4.4 C3.8 5.8 4 7.2 3.2 8.5 C2.6 9.5 1.6 10.3 0.3 10.9 L4 10.9 L4.8 6.8 Z" fill="#a09b6e"/>
<path d="M3.7 6.4 L6.6 10.9 L1.8 10.9 Z" fill="#d9cc9e"/>
<path d="M4.3 5.6 L5.4 5.6 L6.6 6.6 L8.5 6.2 L10.3 6.6 L11.4 7.4 L11.3 8.7 L11.1 11.2 L10.2 11.2 L9.8 9.2 L7.1 9.2 L6.6 11.2 L5.7 11.2 L5.6 8.7 L4.9 7.1 Z" fill="#b06c14"/>
</svg>
<div class="t" style="left:352.3px;top:594.70px">route8</div>
<svg style="left:320.60px;top:617.83px" width="8" height="8" viewBox="0 0 8 8"><path d="M2.5 1.1 L5.3 4 L2.5 6.9" fill="none" stroke="#5a5a5a" stroke-width="0.95"/></svg>
<svg style="left:335.00px;top:612.93px" width="12" height="12" viewBox="0 0 12 12">
<path d="M2.7 0.3 C4.5 -0.1 6.6 0 8 0.6 C6.2 1.5 5.7 3.2 6.6 4.4 C7.4 5.4 9.2 5.9 11.2 6.6 L9.5 7.6 C7.2 7.3 4.8 6.6 3.4 5.3 C1.5 3.8 1.1 1.4 2.7 0.3 Z" fill="#98a5a3"/>
<path d="M3.6 3 C4.2 2 5.2 1.2 6.4 0.9 C5.6 2 5.5 3.3 6.1 4.4 Z" fill="#bfcac6"/>
<path d="M2.4 4.4 C3.8 5.8 4 7.2 3.2 8.5 C2.6 9.5 1.6 10.3 0.3 10.9 L4 10.9 L4.8 6.8 Z" fill="#a09b6e"/>
<path d="M3.7 6.4 L6.6 10.9 L1.8 10.9 Z" fill="#d9cc9e"/>
<path d="M4.3 5.6 L5.4 5.6 L6.6 6.6 L8.5 6.2 L10.3 6.6 L11.4 7.4 L11.3 8.7 L11.1 11.2 L10.2 11.2 L9.8 9.2 L7.1 9.2 L6.6 11.2 L5.7 11.2 L5.6 8.7 L4.9 7.1 Z" fill="#b06c14"/>
</svg>
<div class="t" style="left:352.3px;top:615.03px">route9</div>
<svg style="left:303.40px;top:639.00px" width="8" height="8" viewBox="0 0 8 8"><path d="M2.5 1.1 L5.3 4 L2.5 6.9" fill="none" stroke="#5a5a5a" stroke-width="0.95"/></svg>
<svg style="left:316.00px;top:633.50px" width="14" height="12" viewBox="0 0 14 12">
<path d="M0.6 1.7 C0.6 1.1 1 0.7 1.5 0.7 L4.6 0.7 L5.6 1.7 L10 1.7 C10.5 1.7 10.8 2.1 10.8 2.6 L10.8 5.2 L0.6 10.4 Z" fill="#e2ac52" stroke="#b07b2a" stroke-width="0.5"/>
<path d="M2 2.3 L10 2.3 L10 5.4 L2 5.4 Z" fill="#e6e6df"/>
<path d="M0.8 10.4 L3.8 5.4 L13.4 5.4 L10.4 10.4 Z" fill="#f6d27c" stroke="#c9902f" stroke-width="0.6"/>
</svg>
<div class="t" style="left:334.6px;top:635.90px">endpoints</div>
<svg style="left:303.40px;top:659.25px" width="8" height="8" viewBox="0 0 8 8"><path d="M2.5 1.1 L5.3 4 L2.5 6.9" fill="none" stroke="#5a5a5a" stroke-width="0.95"/></svg>
<svg style="left:316.00px;top:653.75px" width="14" height="12" viewBox="0 0 14 12">
<path d="M0.6 1.7 C0.6 1.1 1 0.7 1.5 0.7 L4.6 0.7 L5.6 1.7 L10 1.7 C10.5 1.7 10.8 2.1 10.8 2.6 L10.8 5.2 L0.6 10.4 Z" fill="#e2ac52" stroke="#b07b2a" stroke-width="0.5"/>
<path d="M2 2.3 L10 2.3 L10 5.4 L2 5.4 Z" fill="#e6e6df"/>
<path d="M0.8 10.4 L3.8 5.4 L13.4 5.4 L10.4 10.4 Z" fill="#f6d27c" stroke="#c9902f" stroke-width="0.6"/>
</svg>
<div class="t" style="left:334.6px;top:656.15px">components</div>
<svg style="left:303.40px;top:679.50px" width="8" height="8" viewBox="0 0 8 8"><path d="M2.5 1.1 L5.3 4 L2.5 6.9" fill="none" stroke="#5a5a5a" stroke-width="0.95"/></svg>
<svg style="left:316.00px;top:674.00px" width="14" height="12" viewBox="0 0 14 12">
<path d="M0.6 1.7 C0.6 1.1 1 0.7 1.5 0.7 L4.6 0.7 L5.6 1.7 L10 1.7 C10.5 1.7 10.8 2.1 10.8 2.6 L10.8 5.2 L0.6 10.4 Z" fill="#e2ac52" stroke="#b07b2a" stroke-width="0.5"/>
<path d="M2 2.3 L10 2.3 L10 5.4 L2 5.4 Z" fill="#e6e6df"/>
<path d="M0.8 10.4 L3.8 5.4 L13.4 5.4 L10.4 10.4 Z" fill="#f6d27c" stroke="#c9902f" stroke-width="0.6"/>
</svg>
<div class="t" style="left:334.6px;top:676.40px">dataformats</div>
<svg style="left:303.40px;top:698.80px" width="8" height="8" viewBox="0 0 8 8"><path d="M2.5 1.1 L5.3 4 L2.5 6.9" fill="none" stroke="#5a5a5a" stroke-width="0.95"/></svg>
<svg style="left:316.3px;top:697.70px" width="10.5" height="8" viewBox="0 0 10.5 8"><path d="M0 0.3 L3.8 0.3 L4.8 1.4 L10.2 1.4 L10.2 8 L0 8 Z" fill="#262626"/></svg>
<div class="t" style="left:331.5px;top:695.70px">MBeans</div>
<div class="a" style="left:528.2px;top:83.60px;font-size:22px;line-height:24px;color:#363636;-webkit-text-stroke:0.55px #fff">routes</div>
<div class="a" style="left:529px;top:144px;width:1054px;height:1px;background:#ededed"></div>
<div class="a" style="left:529.3px;top:115.4px;width:65.3px;height:29.6px;background:#fff;border:1px solid #ededed;border-bottom:none"></div>
<div class="tab" style="left:543px;color:#0088ce">Routes</div>
<div class="tab" style="left:608.9px">Route Diagram</div>
<div class="tab" style="left:720.3px">Source</div>
<div class="tab" style="left:786.7px">Exchanges</div>
<div class="tab" style="left:873px">Type Converters</div>
<div class="a" style="left:527.6px;top:164.20px;font-size:19px;line-height:20px;color:#363636;-webkit-text-stroke:0.5px #fff">Routes</div>
<div class="a" style="left:529px;top:192px;width:1054px;height:42px;background:#f5f5f5;border:1px solid #d1d1d1;border-bottom:none"></div>
<div class="a" style="left:538.3px;top:202px;width:36.3px;height:22px;background:#f7f7f7;border:1px solid #d8d8d8;font-size:10.8px;line-height:20px;text-align:center;color:#8b8d8f">Start</div>
<div class="a" style="left:579px;top:202px;width:34.7px;height:22px;background:#f7f7f7;border:1px solid #d8d8d8;font-size:10.8px;line-height:20px;text-align:center;color:#8b8d8f">Stop</div>
<svg style="left:622px;top:206px" width="6" height="15" viewBox="0 0 6 15"><circle cx="3" cy="2.6" r="1.35" fill="#111"/><circle cx="3" cy="6.8" r="1.35" fill="#111"/><circle cx="3" cy="11" r="1.35" fill="#111"/></svg>
<div class="a" style="left:644.3px;top:202px;width:1px;height:22px;background:#d1d1d1"></div>
<div class="a" style="left:529.3px;top:233.5px;width:1054.2px;height:24.5px;background:linear-gradient(#fafafa,#ededed);border-top:1px solid #d1d1d1;border-bottom:1px solid #d1d1d1"></div>
<div class="a" style="left:529.3px;top:258.00px;width:1054.2px;height:24.33px;background:#fff"></div>
<div class="a" style="left:529.3px;top:281.83px;width:1054.2px;height:24.33px;background:#f5f5f5"></div>
<div class="a" style="left:529.3px;top:305.66px;width:1054.2px;height:24.33px;background:#fff"></div>
<div class="a" style="left:529.3px;top:329.49px;width:1054.2px;height:24.33px;background:#f5f5f5"></div>
<div class="a" style="left:529.3px;top:353.32px;width:1054.2px;height:24.33px;background:#fff"></div>
<div class="a" style="left:529.3px;top:377.15px;width:1054.2px;height:24.33px;background:#f5f5f5"></div>
<div class="a" style="left:529.3px;top:400.98px;width:1054.2px;height:24.33px;background:#fff"></div>
<div class="a" style="left:529.3px;top:424.81px;width:1054.2px;height:24.33px;background:#f5f5f5"></div>
<div class="a" style="left:529.3px;top:448.64px;width:1054.2px;height:24.33px;background:#fff"></div>
<div class="a" style="left:529.3px;top:472.47px;width:1054.2px;height:24.33px;background:#f5f5f5"></div>
<div class="a" style="left:529.3px;top:496.30px;width:1054.2px;height:24.33px;background:#fff"></div>
<div class="a" style="left:529.3px;top:520.13px;width:1054.2px;height:24.33px;background:#f5f5f5"></div>
<div class="a" style="left:529.3px;top:543.96px;width:1054.2px;height:24.33px;background:#fff"></div>
<div class="a" style="left:529.3px;top:567.79px;width:1054.2px;height:24.33px;background:#f5f5f5"></div>
<div class="a" style="left:529.3px;top:591.62px;width:1054.2px;height:24.33px;background:#fff"></div>
<div class="a" style="left:529.3px;top:615.45px;width:1054.2px;height:24.33px;background:#f5f5f5"></div>
<div class="a" style="left:529.3px;top:639.28px;width:1054.2px;height:24.33px;background:#fff"></div>
<div class="a" style="left:529.3px;top:663.11px;width:1054.2px;height:24.33px;background:#f5f5f5"></div>
<div class="a" style="left:529.3px;top:686.94px;width:1054.2px;height:24.33px;background:#fff"></div>
<div class="a" style="left:529.3px;top:710.77px;width:1054.2px;height:24.33px;background:#f5f5f5"></div>
<div class="a" style="left:529.3px;top:734.60px;width:1054.2px;height:24.33px;background:#fff"></div>
<div class="a" style="left:529.3px;top:758.43px;width:1054.2px;height:24.33px;background:#f5f5f5"></div>
<div class="a" style="left:529.3px;top:281.23px;width:1054.2px;height:1.1px;background:#d1d1d1"></div>
<div class="a" style="left:529.3px;top:305.06px;width:1054.2px;height:1.1px;background:#d1d1d1"></div>
<div class="a" style="left:529.3px;top:328.89px;width:1054.2px;height:1.1px;background:#d1d1d1"></div>
<div class="a" style="left:529.3px;top:352.72px;width:1054.2px;height:1.1px;background:#d1d1d1"></div>
<div class="a" style="left:529.3px;top:376.55px;width:1054.2px;height:1.1px;background:#d1d1d1"></div>
<div class="a" style="left:529.3px;top:400.38px;width:1054.2px;height:1.1px;background:#d1d1d1"></div>
<div class="a" style="left:529.3px;top:424.21px;width:1054.2px;height:1.1px;background:#d1d1d1"></div>
<div class="a" style="left:529.3px;top:448.04px;width:1054.2px;height:1.1px;background:#d1d1d1"></div>
<div class="a" style="left:529.3px;top:471.87px;width:1054.2px;height:1.1px;background:#d1d1d1"></div>
<div class="a" style="left:529.3px;top:495.70px;width:1054.2px;height:1.1px;background:#d1d1d1"></div>
<div class="a" style="left:529.3px;top:519.53px;width:1054.2px;height:1.1px;background:#d1d1d1"></div>
<div class="a" style="left:529.3px;top:543.36px;width:1054.2px;height:1.1px;background:#d1d1d1"></div>
<div class="a" style="left:529.3px;top:567.19px;width:1054.2px;height:1.1px;background:#d1d1d1"></div>
<div class="a" style="left:529.3px;top:591.02px;width:1054.2px;height:1.1px;background:#d1d1d1"></div>
<div class="a" style="left:529.3px;top:614.85px;width:1054.2px;height:1.1px;background:#d1d1d1"></div>
<div class="a" style="left:529.3px;top:638.68px;width:1054.2px;height:1.1px;background:#d1d1d1"></div>
<div class="a" style="left:529.3px;top:662.51px;width:1054.2px;height:1.1px;background:#d1d1d1"></div>
<div class="a" style="left:529.3px;top:686.34px;width:1054.2px;height:1.1px;background:#d1d1d1"></div>
<div class="a" style="left:529.3px;top:710.17px;width:1054.2px;height:1.1px;background:#d1d1d1"></div>
<div class="a" style="left:529.3px;top:734.00px;width:1054.2px;height:1.1px;background:#d1d1d1"></div>
<div class="a" style="left:529.3px;top:757.83px;width:1054.2px;height:1.1px;background:#d1d1d1"></div>
<div class="a" style="left:529.3px;top:781.66px;width:1054.2px;height:1.1px;background:#d1d1d1"></div>
<div class="a" style="left:528.80px;top:233.5px;width:1.1px;height:549.26px;background:#d1d1d1"></div>
<div class="a" style="left:558.90px;top:233.5px;width:1.1px;height:549.26px;background:#d1d1d1"></div>
<div class="a" style="left:786.00px;top:233.5px;width:1.1px;height:549.26px;background:#d1d1d1"></div>
<div class="a" style="left:878.30px;top:233.5px;width:1.1px;height:549.26px;background:#d1d1d1"></div>
<div class="a" style="left:973.90px;top:233.5px;width:1.1px;height:549.26px;background:#d1d1d1"></div>
<div class="a" style="left:1101.20px;top:233.5px;width:1.1px;height:549.26px;background:#d1d1d1"></div>
<div class="a" style="left:1184.20px;top:233.5px;width:1.1px;height:549.26px;background:#d1d1d1"></div>
<div class="a" style="left:1289.40px;top:233.5px;width:1.1px;height:549.26px;background:#d1d1d1"></div>
<div class="a" style="left:1364.30px;top:233.5px;width:1.1px;height:549.26px;background:#d1d1d1"></div>
<div class="a" style="left:1458.30px;top:233.5px;width:1.1px;height:549.26px;background:#d1d1d1"></div>
<div class="a" style="left:1583.00px;top:233.5px;width:1.1px;height:549.26px;background:#d1d1d1"></div>
<div class="a" style="left:559.4px;top:234px;width:227px;height:2px;background:#0088ce"></div>
<div class="th" style="left:567.80px;top:240.30px;color:#0088ce">Name</div>
<div class="th" style="left:794.90px;top:240.30px;color:#363636">State</div>
<div class="th" style="left:887.20px;top:240.30px;color:#363636">Uptime</div>
<div class="th" style="left:982.80px;top:240.30px;color:#363636">Completed</div>
<div class="th" style="left:1110.10px;top:240.30px;color:#363636">Failed</div>
<div class="th" style="left:1193.10px;top:240.30px;color:#363636">Handled</div>
<div class="th" style="left:1298.30px;top:240.30px;color:#363636">Total</div>
<div class="th" style="left:1373.20px;top:240.30px;color:#363636">Inflight</div>
<div class="th" style="left:1467.20px;top:240.30px;color:#363636">Mean time</div>
<svg style="left:604px;top:242px" width="8" height="6" viewBox="0 0 8 6"><path d="M1.2 4.2 L4 1.4 L6.8 4.2" fill="none" stroke="#0088ce" stroke-width="1.1"/></svg>
<div class="a" style="left:538.4px;top:240.00px;width:11.8px;height:11.6px;border:1.7px solid #7f7d8c;border-radius:1.5px;background:#fff"></div>
<div class="a" style="left:538.4px;top:264.30px;width:11.8px;height:11.6px;border:1.7px solid #7f7d8c;border-radius:1.5px;background:#fff"></div>
<div class="t" style="left:569.2px;top:262.80px">Broadcast Reminders</div>
<div class="t" style="left:794.6px;top:262.80px">Started</div>
<div class="t" style="left:878.8px;width:86.40px;text-align:right;top:262.80px">32s</div>
<div class="t" style="left:974.4px;width:118.10px;text-align:right;top:262.80px">0</div>
<div class="t" style="left:1101.7px;width:73.80px;text-align:right;top:262.80px">0</div>
<div class="t" style="left:1184.7px;width:96.00px;text-align:right;top:262.80px">0</div>
<div class="t" style="left:1289.9px;width:65.70px;text-align:right;top:262.80px">0</div>
<div class="t" style="left:1364.8px;width:84.80px;text-align:right;top:262.80px">0</div>
<div class="t" style="left:1458.8px;width:115.50px;text-align:right;top:262.80px">-1 ms</div>
<div class="a" style="left:538.4px;top:288.13px;width:11.8px;height:11.6px;border:1.7px solid #7f7d8c;border-radius:1.5px;background:#fff"></div>
<div class="t" style="left:569.2px;top:286.63px">Compute Period</div>
<div class="t" style="left:794.6px;top:286.63px">Started</div>
<div class="t" style="left:878.8px;width:86.40px;text-align:right;top:286.63px">33s</div>
<div class="t" style="left:974.4px;width:118.10px;text-align:right;top:286.63px">0</div>
<div class="t" style="left:1101.7px;width:73.80px;text-align:right;top:286.63px">0</div>
<div class="t" style="left:1184.7px;width:96.00px;text-align:right;top:286.63px">0</div>
<div class="t" style="left:1289.9px;width:65.70px;text-align:right;top:286.63px">0</div>
<div class="t" style="left:1364.8px;width:84.80px;text-align:right;top:286.63px">0</div>
<div class="t" style="left:1458.8px;width:115.50px;text-align:right;top:286.63px">-1 ms</div>
<div class="a" style="left:538.4px;top:311.96px;width:11.8px;height:11.6px;border:1.7px solid #7f7d8c;border-radius:1.5px;background:#fff"></div>
<div class="t" style="left:569.2px;top:310.46px">Consume Report</div>
<div class="t" style="left:794.6px;top:310.46px">Started</div>
<div class="t" style="left:878.8px;width:86.40px;text-align:right;top:310.46px">33s</div>
<div class="t" style="left:974.4px;width:118.10px;text-align:right;top:310.46px">0</div>
<div class="t" style="left:1101.7px;width:73.80px;text-align:right;top:310.46px">0</div>
<div class="t" style="left:1184.7px;width:96.00px;text-align:right;top:310.46px">0</div>
<div class="t" style="left:1289.9px;width:65.70px;text-align:right;top:310.46px">0</div>
<div class="t" style="left:1364.8px;width:84.80px;text-align:right;top:310.46px">0</div>
<div class="t" style="left:1458.8px;width:115.50px;text-align:right;top:310.46px">-1 ms</div>
<div class="a" style="left:538.4px;top:335.79px;width:11.8px;height:11.6px;border:1.7px solid #7f7d8c;border-radius:1.5px;background:#fff"></div>
<div class="t" style="left:569.2px;top:334.29px">Create RapidPro Fields</div>
<div class="t" style="left:794.6px;top:334.29px">Started</div>
<div class="t" style="left:878.8px;width:86.40px;text-align:right;top:334.29px">33s</div>
<div class="t" style="left:974.4px;width:118.10px;text-align:right;top:334.29px">0</div>
<div class="t" style="left:1101.7px;width:73.80px;text-align:right;top:334.29px">0</div>
<div class="t" style="left:1184.7px;width:96.00px;text-align:right;top:334.29px">0</div>
<div class="t" style="left:1289.9px;width:65.70px;text-align:right;top:334.29px">0</div>
<div class="t" style="left:1364.8px;width:84.80px;text-align:right;top:334.29px">0</div>
<div class="t" style="left:1458.8px;width:115.50px;text-align:right;top:334.29px">-1 ms</div>
<div class="a" style="left:538.4px;top:359.62px;width:11.8px;height:11.6px;border:1.7px solid #7f7d8c;border-radius:1.5px;background:#fff"></div>
<div class="t" style="left:569.2px;top:358.12px">Create RapidPro Group</div>
<div class="t" style="left:794.6px;top:358.12px">Started</div>
<div class="t" style="left:878.8px;width:86.40px;text-align:right;top:358.12px">33s</div>
<div class="t" style="left:974.4px;width:118.10px;text-align:right;top:358.12px">0</div>
<div class="t" style="left:1101.7px;width:73.80px;text-align:right;top:358.12px">0</div>
<div class="t" style="left:1184.7px;width:96.00px;text-align:right;top:358.12px">0</div>
<div class="t" style="left:1289.9px;width:65.70px;text-align:right;top:358.12px">0</div>
<div class="t" style="left:1364.8px;width:84.80px;text-align:right;top:358.12px">0</div>
<div class="t" style="left:1458.8px;width:115.50px;text-align:right;top:358.12px">-1 ms</div>
<div class="a" style="left:538.4px;top:383.45px;width:11.8px;height:11.6px;border:1.7px solid #7f7d8c;border-radius:1.5px;background:#fff"></div>
<div class="t" style="left:569.2px;top:381.95px">Deliver Report</div>
<div class="t" style="left:794.6px;top:381.95px">Started</div>
<div class="t" style="left:878.8px;width:86.40px;text-align:right;top:381.95px">33s</div>
<div class="t" style="left:974.4px;width:118.10px;text-align:right;top:381.95px">0</div>
<div class="t" style="left:1101.7px;width:73.80px;text-align:right;top:381.95px">0</div>
<div class="t" style="left:1184.7px;width:96.00px;text-align:right;top:381.95px">0</div>
<div class="t" style="left:1289.9px;width:65.70px;text-align:right;top:381.95px">0</div>
<div class="t" style="left:1364.8px;width:84.80px;text-align:right;top:381.95px">0</div>
<div class="t" style="left:1458.8px;width:115.50px;text-align:right;top:381.95px">-1 ms</div>
<div class="a" style="left:538.4px;top:407.28px;width:11.8px;height:11.6px;border:1.7px solid #7f7d8c;border-radius:1.5px;background:#fff"></div>
<div class="t" style="left:569.2px;top:405.78px">RapidPro Webhook</div>
<div class="t" style="left:794.6px;top:405.78px">Started</div>
<div class="t" style="left:878.8px;width:86.40px;text-align:right;top:405.78px">33s</div>
<div class="t" style="left:974.4px;width:118.10px;text-align:right;top:405.78px">0</div>
<div class="t" style="left:1101.7px;width:73.80px;text-align:right;top:405.78px">0</div>
<div class="t" style="left:1184.7px;width:96.00px;text-align:right;top:405.78px">0</div>
<div class="t" style="left:1289.9px;width:65.70px;text-align:right;top:405.78px">0</div>
<div class="t" style="left:1364.8px;width:84.80px;text-align:right;top:405.78px">0</div>
<div class="t" style="left:1458.8px;width:115.50px;text-align:right;top:405.78px">-1 ms</div>
<div class="a" style="left:538.4px;top:431.11px;width:11.8px;height:11.6px;border:1.7px solid #7f7d8c;border-radius:1.5px;background:#fff"></div>
<div class="t" style="left:569.2px;top:429.61px">Retry Reports</div>
<div class="t" style="left:794.6px;top:429.61px">Started</div>
<div class="t" style="left:878.8px;width:86.40px;text-align:right;top:429.61px">33s</div>
<div class="t" style="left:974.4px;width:118.10px;text-align:right;top:429.61px">7</div>
<div class="t" style="left:1101.7px;width:73.80px;text-align:right;top:429.61px">0</div>
<div class="t" style="left:1184.7px;width:96.00px;text-align:right;top:429.61px">0</div>
<div class="t" style="left:1289.9px;width:65.70px;text-align:right;top:429.61px">7</div>
<div class="t" style="left:1364.8px;width:84.80px;text-align:right;top:429.61px">0</div>
<div class="t" style="left:1458.8px;width:115.50px;text-align:right;top:429.61px">3 ms</div>
<div class="a" style="left:538.4px;top:454.94px;width:11.8px;height:11.6px;border:1.7px solid #7f7d8c;border-radius:1.5px;background:#fff"></div>
<div class="t" style="left:569.2px;top:453.44px">route1</div>
<div class="t" style="left:794.6px;top:453.44px">Started</div>
<div class="t" style="left:878.8px;width:86.40px;text-align:right;top:453.44px">33s</div>
<div class="t" style="left:974.4px;width:118.10px;text-align:right;top:453.44px">0</div>
<div class="t" style="left:1101.7px;width:73.80px;text-align:right;top:453.44px">0</div>
<div class="t" style="left:1184.7px;width:96.00px;text-align:right;top:453.44px">0</div>
<div class="t" style="left:1289.9px;width:65.70px;text-align:right;top:453.44px">0</div>
<div class="t" style="left:1364.8px;width:84.80px;text-align:right;top:453.44px">0</div>
<div class="t" style="left:1458.8px;width:115.50px;text-align:right;top:453.44px">-1 ms</div>
<div class="a" style="left:538.4px;top:478.77px;width:11.8px;height:11.6px;border:1.7px solid #7f7d8c;border-radius:1.5px;background:#fff"></div>
<div class="t" style="left:569.2px;top:477.27px">route10</div>
<div class="t" style="left:794.6px;top:477.27px">Started</div>
<div class="t" style="left:878.8px;width:86.40px;text-align:right;top:477.27px">33s</div>
<div class="t" style="left:974.4px;width:118.10px;text-align:right;top:477.27px">0</div>
<div class="t" style="left:1101.7px;width:73.80px;text-align:right;top:477.27px">0</div>
<div class="t" style="left:1184.7px;width:96.00px;text-align:right;top:477.27px">0</div>
<div class="t" style="left:1289.9px;width:65.70px;text-align:right;top:477.27px">0</div>
<div class="t" style="left:1364.8px;width:84.80px;text-align:right;top:477.27px">0</div>
<div class="t" style="left:1458.8px;width:115.50px;text-align:right;top:477.27px">-1 ms</div>
<div class="a" style="left:538.4px;top:502.60px;width:11.8px;height:11.6px;border:1.7px solid #7f7d8c;border-radius:1.5px;background:#fff"></div>
<div class="t" style="left:569.2px;top:501.10px">route11</div>
<div class="t" style="left:794.6px;top:501.10px">Started</div>
<div class="t" style="left:878.8px;width:86.40px;text-align:right;top:501.10px">33s</div>
<div class="t" style="left:974.4px;width:118.10px;text-align:right;top:501.10px">0</div>
<div class="t" style="left:1101.7px;width:73.80px;text-align:right;top:501.10px">0</div>
<div class="t" style="left:1184.7px;width:96.00px;text-align:right;top:501.10px">0</div>
<div class="t" style="left:1289.9px;width:65.70px;text-align:right;top:501.10px">0</div>
<div class="t" style="left:1364.8px;width:84.80px;text-align:right;top:501.10px">0</div>
<div class="t" style="left:1458.8px;width:115.50px;text-align:right;top:501.10px">-1 ms</div>
<div class="a" style="left:538.4px;top:526.43px;width:11.8px;height:11.6px;border:1.7px solid #7f7d8c;border-radius:1.5px;background:#fff"></div>
<div class="t" style="left:569.2px;top:524.93px">route12</div>
<div class="t" style="left:794.6px;top:524.93px">Started</div>
<div class="t" style="left:878.8px;width:86.40px;text-align:right;top:524.93px">33s</div>
<div class="t" style="left:974.4px;width:118.10px;text-align:right;top:524.93px">0</div>
<div class="t" style="left:1101.7px;width:73.80px;text-align:right;top:524.93px">0</div>
<div class="t" style="left:1184.7px;width:96.00px;text-align:right;top:524.93px">0</div>
<div class="t" style="left:1289.9px;width:65.70px;text-align:right;top:524.93px">0</div>
<div class="t" style="left:1364.8px;width:84.80px;text-align:right;top:524.93px">0</div>
<div class="t" style="left:1458.8px;width:115.50px;text-align:right;top:524.93px">-1 ms</div>
<div class="a" style="left:538.4px;top:550.26px;width:11.8px;height:11.6px;border:1.7px solid #7f7d8c;border-radius:1.5px;background:#fff"></div>
<div class="t" style="left:569.2px;top:548.76px">route2</div>
<div class="t" style="left:794.6px;top:548.76px">Started</div>
<div class="t" style="left:878.8px;width:86.40px;text-align:right;top:548.76px">33s</div>
<div class="t" style="left:974.4px;width:118.10px;text-align:right;top:548.76px">0</div>
<div class="t" style="left:1101.7px;width:73.80px;text-align:right;top:548.76px">0</div>
<div class="t" style="left:1184.7px;width:96.00px;text-align:right;top:548.76px">0</div>
<div class="t" style="left:1289.9px;width:65.70px;text-align:right;top:548.76px">0</div>
<div class="t" style="left:1364.8px;width:84.80px;text-align:right;top:548.76px">0</div>
<div class="t" style="left:1458.8px;width:115.50px;text-align:right;top:548.76px">-1 ms</div>
<div class="a" style="left:538.4px;top:574.09px;width:11.8px;height:11.6px;border:1.7px solid #7f7d8c;border-radius:1.5px;background:#fff"></div>
<div class="t" style="left:569.2px;top:572.59px">route5</div>
<div class="t" style="left:794.6px;top:572.59px">Started</div>
<div class="t" style="left:878.8px;width:86.40px;text-align:right;top:572.59px">33s</div>
<div class="t" style="left:974.4px;width:118.10px;text-align:right;top:572.59px">0</div>
<div class="t" style="left:1101.7px;width:73.80px;text-align:right;top:572.59px">0</div>
<div class="t" style="left:1184.7px;width:96.00px;text-align:right;top:572.59px">0</div>
<div class="t" style="left:1289.9px;width:65.70px;text-align:right;top:572.59px">0</div>
<div class="t" style="left:1364.8px;width:84.80px;text-align:right;top:572.59px">0</div>
<div class="t" style="left:1458.8px;width:115.50px;text-align:right;top:572.59px">-1 ms</div>
<div class="a" style="left:538.4px;top:597.92px;width:11.8px;height:11.6px;border:1.7px solid #7f7d8c;border-radius:1.5px;background:#fff"></div>
<div class="t" style="left:569.2px;top:596.42px">route6</div>
<div class="t" style="left:794.6px;top:596.42px">Started</div>
<div class="t" style="left:878.8px;width:86.40px;text-align:right;top:596.42px">33s</div>
<div class="t" style="left:974.4px;width:118.10px;text-align:right;top:596.42px">0</div>
<div class="t" style="left:1101.7px;width:73.80px;text-align:right;top:596.42px">0</div>
<div class="t" style="left:1184.7px;width:96.00px;text-align:right;top:596.42px">0</div>
<div class="t" style="left:1289.9px;width:65.70px;text-align:right;top:596.42px">0</div>
<div class="t" style="left:1364.8px;width:84.80px;text-align:right;top:596.42px">0</div>
<div class="t" style="left:1458.8px;width:115.50px;text-align:right;top:596.42px">-1 ms</div>
<div class="a" style="left:538.4px;top:621.75px;width:11.8px;height:11.6px;border:1.7px solid #7f7d8c;border-radius:1.5px;background:#fff"></div>
<div class="t" style="left:569.2px;top:620.25px">route7</div>
<div class="t" style="left:794.6px;top:620.25px">Started</div>
<div class="t" style="left:878.8px;width:86.40px;text-align:right;top:620.25px">33s</div>
<div class="t" style="left:974.4px;width:118.10px;text-align:right;top:620.25px">0</div>
<div class="t" style="left:1101.7px;width:73.80px;text-align:right;top:620.25px">0</div>
<div class="t" style="left:1184.7px;width:96.00px;text-align:right;top:620.25px">0</div>
<div class="t" style="left:1289.9px;width:65.70px;text-align:right;top:620.25px">0</div>
<div class="t" style="left:1364.8px;width:84.80px;text-align:right;top:620.25px">0</div>
<div class="t" style="left:1458.8px;width:115.50px;text-align:right;top:620.25px">-1 ms</div>
<div class="a" style="left:538.4px;top:645.58px;width:11.8px;height:11.6px;border:1.7px solid #7f7d8c;border-radius:1.5px;background:#fff"></div>
<div class="t" style="left:569.2px;top:644.08px">route8</div>
<div class="t" style="left:794.6px;top:644.08px">Started</div>
<div class="t" style="left:878.8px;width:86.40px;text-align:right;top:644.08px">33s</div>
<div class="t" style="left:974.4px;width:118.10px;text-align:right;top:644.08px">0</div>
<div class="t" style="left:1101.7px;width:73.80px;text-align:right;top:644.08px">0</div>
<div class="t" style="left:1184.7px;width:96.00px;text-align:right;top:644.08px">0</div>
<div class="t" style="left:1289.9px;width:65.70px;text-align:right;top:644.08px">0</div>
<div class="t" style="left:1364.8px;width:84.80px;text-align:right;top:644.08px">0</div>
<div class="t" style="left:1458.8px;width:115.50px;text-align:right;top:644.08px">-1 ms</div>
<div class="a" style="left:538.4px;top:669.41px;width:11.8px;height:11.6px;border:1.7px solid #7f7d8c;border-radius:1.5px;background:#fff"></div>
<div class="t" style="left:569.2px;top:667.91px">route9</div>
<div class="t" style="left:794.6px;top:667.91px">Started</div>
<div class="t" style="left:878.8px;width:86.40px;text-align:right;top:667.91px">33s</div>
<div class="t" style="left:974.4px;width:118.10px;text-align:right;top:667.91px">0</div>
<div class="t" style="left:1101.7px;width:73.80px;text-align:right;top:667.91px">0</div>
<div class="t" style="left:1184.7px;width:96.00px;text-align:right;top:667.91px">0</div>
<div class="t" style="left:1289.9px;width:65.70px;text-align:right;top:667.91px">0</div>
<div class="t" style="left:1364.8px;width:84.80px;text-align:right;top:667.91px">0</div>
<div class="t" style="left:1458.8px;width:115.50px;text-align:right;top:667.91px">-1 ms</div>
<div class="a" style="left:538.4px;top:693.24px;width:11.8px;height:11.6px;border:1.7px solid #7f7d8c;border-radius:1.5px;background:#fff"></div>
<div class="t" style="left:569.2px;top:691.74px">Save Failed Report</div>
<div class="t" style="left:794.6px;top:691.74px">Started</div>
<div class="t" style="left:878.8px;width:86.40px;text-align:right;top:691.74px">33s</div>
<div class="t" style="left:974.4px;width:118.10px;text-align:right;top:691.74px">0</div>
<div class="t" style="left:1101.7px;width:73.80px;text-align:right;top:691.74px">0</div>
<div class="t" style="left:1184.7px;width:96.00px;text-align:right;top:691.74px">0</div>
<div class="t" style="left:1289.9px;width:65.70px;text-align:right;top:691.74px">0</div>
<div class="t" style="left:1364.8px;width:84.80px;text-align:right;top:691.74px">0</div>
<div class="t" style="left:1458.8px;width:115.50px;text-align:right;top:691.74px">-1 ms</div>
<div class="a" style="left:538.4px;top:717.07px;width:11.8px;height:11.6px;border:1.7px solid #7f7d8c;border-radius:1.5px;background:#fff"></div>
<div class="t" style="left:569.2px;top:715.57px">Scan RapidPro Flows</div>
<div class="t" style="left:794.6px;top:715.57px">Started</div>
<div class="t" style="left:878.8px;width:86.40px;text-align:right;top:715.57px">33s</div>
<div class="t" style="left:974.4px;width:118.10px;text-align:right;top:715.57px">0</div>
<div class="t" style="left:1101.7px;width:73.80px;text-align:right;top:715.57px">0</div>
<div class="t" style="left:1184.7px;width:96.00px;text-align:right;top:715.57px">0</div>
<div class="t" style="left:1289.9px;width:65.70px;text-align:right;top:715.57px">0</div>
<div class="t" style="left:1364.8px;width:84.80px;text-align:right;top:715.57px">0</div>
<div class="t" style="left:1458.8px;width:115.50px;text-align:right;top:715.57px">-1 ms</div>
<div class="a" style="left:538.4px;top:740.90px;width:11.8px;height:11.6px;border:1.7px solid #7f7d8c;border-radius:1.5px;background:#fff"></div>
<div class="t" style="left:569.2px;top:739.40px">Set up RapidPro</div>
<div class="t" style="left:794.6px;top:739.40px">Started</div>
<div class="t" style="left:878.8px;width:86.40px;text-align:right;top:739.40px">33s</div>
<div class="t" style="left:974.4px;width:118.10px;text-align:right;top:739.40px">0</div>
<div class="t" style="left:1101.7px;width:73.80px;text-align:right;top:739.40px">0</div>
<div class="t" style="left:1184.7px;width:96.00px;text-align:right;top:739.40px">0</div>
<div class="t" style="left:1289.9px;width:65.70px;text-align:right;top:739.40px">0</div>
<div class="t" style="left:1364.8px;width:84.80px;text-align:right;top:739.40px">0</div>
<div class="t" style="left:1458.8px;width:115.50px;text-align:right;top:739.40px">-1 ms</div>
<div class="a" style="left:538.4px;top:764.73px;width:11.8px;height:11.6px;border:1.7px solid #7f7d8c;border-radius:1.5px;background:#fff"></div>
<div class="t" style="left:569.2px;top:763.23px">Transform Report</div>
<div class="t" style="left:794.6px;top:763.23px">Started</div>
<div class="t" style="left:878.8px;width:86.40px;text-align:right;top:763.23px">33s</div>
<div class="t" style="left:974.4px;width:118.10px;text-align:right;top:763.23px">0</div>
<div class="t" style="left:1101.7px;width:73.80px;text-align:right;top:763.23px">0</div>
<div class="t" style="left:1184.7px;width:96.00px;text-align:right;top:763.23px">0</div>
<div class="t" style="left:1289.9px;width:65.70px;text-align:right;top:763.23px">0</div>
<div class="t" style="left:1364.8px;width:84.80px;text-align:right;top:763.23px">0</div>
<div class="t" style="left:1458.8px;width:115.50px;text-align:right;top:763.23px">-1 ms</div>
</div></body></html>
